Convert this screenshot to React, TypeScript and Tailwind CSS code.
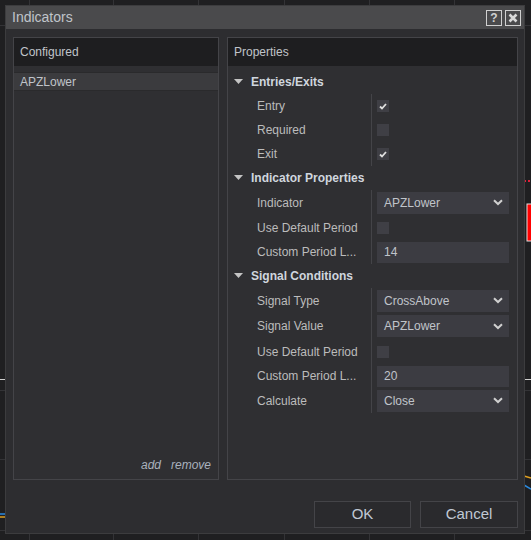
import React from "react";

const font = { fontFamily: '"Liberation Sans", Arial, sans-serif' };

function Check({ on }: { on: boolean }) {
  return (
    <div className="flex h-[12px] w-[12px] items-center justify-center bg-[#3f3f45]">
      {on && (
        <svg width="8" height="7" viewBox="0 0 8 7">
          <path d="M1 3.5 L3 5.5 L7 1" stroke="#e0e0e0" strokeWidth="1.8" fill="none" />
        </svg>
      )}
    </div>
  );
}

function Select({ value }: { value: string }) {
  return (
    <div className="flex h-[22px] w-[132px] items-center justify-between bg-[#3c3c42] pl-[7px] pr-[6px] text-[12px] text-[#c0c4ca]">
      <span>{value}</span>
      <svg width="10" height="7" viewBox="0 0 10 7">
        <path d="M1 1.2 L5 5 L9 1.2" stroke="#d0d0d0" strokeWidth="2" fill="none" />
      </svg>
    </div>
  );
}

function Input({ value }: { value: string }) {
  return (
    <div className="flex h-[21px] w-[132px] items-center bg-[#3c3c42] pl-[7px] text-[12px] text-[#c0c4ca]">
      {value}
    </div>
  );
}

function GroupHeader({ title }: { title: string }) {
  return (
    <div className="flex h-[24px] items-center pl-[6px]">
      <svg width="9" height="6" viewBox="0 0 9 6" className="mr-[8px]">
        <path d="M0 0 L9 0 L4.5 5 Z" fill="#c4c4c4" />
      </svg>
      <span className="text-[12px] font-bold text-[#d0d6de]">{title}</span>
    </div>
  );
}

type Row = { label: string; h: string; ctrl: React.ReactNode };

function Group({ title, rows }: { title: string; rows: Row[] }) {
  return (
    <div>
      <GroupHeader title={title} />
      <div className="flex">
        <div className="w-[144px] border-r border-[#444448]">
          {rows.map((r, i) => (
            <div key={i} className={`flex items-center pl-[29px] text-[12px] text-[#bcbcbc] ${r.h}`}>
              {r.label}
            </div>
          ))}
        </div>
        <div className="pl-[5px]">
          {rows.map((r, i) => (
            <div key={i} className={`flex items-center ${r.h}`}>
              {r.ctrl}
            </div>
          ))}
        </div>
      </div>
    </div>
  );
}

function ChartBg() {
  const vx = [29, 113, 198, 284, 369, 454];
  const hy = [25, 390, 459, 530];
  return (
    <svg className="absolute inset-0" width="531" height="540">
      {vx.map((x) => (
        <line key={x} x1={x + 0.5} y1="0" x2={x + 0.5} y2="540" stroke="#333336" />
      ))}
      {hy.map((y) => (
        <line key={y} x1="0" y1={y + 0.5} x2="531" y2={y + 0.5} stroke="#333336" />
      ))}
      <line x1="0" y1="379.5" x2="531" y2="379.5" stroke="#cfcfcf" />
      <rect x="527" y="204" width="5" height="37" fill="#ff0000" stroke="#e0e0e0" />
      <line x1="524" y1="181" x2="531" y2="181" stroke="#e0203a" strokeWidth="2" strokeDasharray="2 2" />
      <path d="M524 476 L531 478" stroke="#e0a020" strokeWidth="1.5" />
      <path d="M524 485 L531 489" stroke="#2a8ae0" strokeWidth="1.5" />
      <path d="M0 514 L6 514" stroke="#2a8ae0" strokeWidth="1.5" />
      <path d="M0 517 L6 517" stroke="#e0a020" strokeWidth="1.5" />
    </svg>
  );
}

export default function App() {
  return (
    <div className="relative h-[540px] w-[531px] overflow-hidden bg-[#1f1f21]" style={font}>
      <ChartBg />
      <div className="relative pl-[5px] pt-[5px]">
        <div className="flex h-[529px] w-[520px] flex-col border border-[#3c3c3e] bg-[#2d2d30]">
          <div className="flex h-[23px] items-center justify-between bg-[#4a4a4c] pl-[6px] pr-[3px]">
            <span className="text-[14px] text-[#c0c4ca]">Indicators</span>
            <div className="flex gap-[3px]">
              <div className="flex h-[16px] w-[16px] items-center justify-center border border-[#d0d0d0] text-[12px] font-bold leading-none text-[#d0d0d0]">
                ?
              </div>
              <div className="flex h-[16px] w-[16px] items-center justify-center border border-[#d0d0d0]">
                <svg width="10" height="10" viewBox="0 0 10 10">
                  <path d="M1.5 1.5 L8.5 8.5 M8.5 1.5 L1.5 8.5" stroke="#d8d8d8" strokeWidth="2.6" />
                </svg>
              </div>
            </div>
          </div>

          <div className="flex gap-[8px] pl-[7px] pt-[8px]">
            <div className="flex h-[443px] w-[206px] flex-col border border-[#444448] bg-[#2f2f32]">
              <div className="flex h-[28px] items-center bg-[#1e1e20] pl-[6px] text-[12px] text-[#c0c4ca]">
                Configured
              </div>
              <div className="mt-[6px] flex h-[19px] items-center border-y border-[#2a2a2c] bg-[#3b3b3e] pl-[6px] text-[12px] text-[#c0c4ca]">
                APZLower
              </div>
              <div className="flex-1" />
              <div className="flex justify-end gap-[10px] pb-[5px] pr-[7px] text-[12px] italic text-[#aab2be]">
                <span>add</span>
                <span>remove</span>
              </div>
            </div>

            <div className="flex h-[443px] w-[291px] flex-col border border-[#444448] bg-[#2f2f32]">
              <div className="flex h-[28px] items-center bg-[#1e1e20] pl-[6px] text-[12px] text-[#c0c4ca]">
                Properties
              </div>
              <div className="pt-[4px]">
                <Group
                  title="Entries/Exits"
                  rows={[
                    { label: "Entry", h: "h-[24px]", ctrl: <Check on /> },
                    { label: "Required", h: "h-[24px]", ctrl: <Check on={false} /> },
                    { label: "Exit", h: "h-[24px]", ctrl: <Check on /> },
                  ]}
                />
                <Group
                  title="Indicator Properties"
                  rows={[
                    { label: "Indicator", h: "h-[25px]", ctrl: <Select value="APZLower" /> },
                    { label: "Use Default Period", h: "h-[25px]", ctrl: <Check on={false} /> },
                    { label: "Custom Period L...", h: "h-[24px]", ctrl: <Input value="14" /> },
                  ]}
                />
                <Group
                  title="Signal Conditions"
                  rows={[
                    { label: "Signal Type", h: "h-[25px]", ctrl: <Select value="CrossAbove" /> },
                    { label: "Signal Value", h: "h-[26px]", ctrl: <Select value="APZLower" /> },
                    { label: "Use Default Period", h: "h-[25px]", ctrl: <Check on={false} /> },
                    { label: "Custom Period L...", h: "h-[24px]", ctrl: <Input value="20" /> },
                    { label: "Calculate", h: "h-[25px]", ctrl: <Select value="Close" /> },
                  ]}
                />
              </div>
            </div>
          </div>

          <div className="flex justify-end gap-[9px] pr-[6px] pt-[21px]">
            <div className="flex h-[27px] w-[97px] items-center justify-center border border-[#444448] bg-[#2a2a2d] text-[15px] text-[#c0c8d4]">
              OK
            </div>
            <div className="flex h-[27px] w-[98px] items-center justify-center border border-[#444448] bg-[#2a2a2d] text-[15px] text-[#c0c8d4]">
              Cancel
            </div>
          </div>
        </div>
      </div>
    </div>
  );
}
